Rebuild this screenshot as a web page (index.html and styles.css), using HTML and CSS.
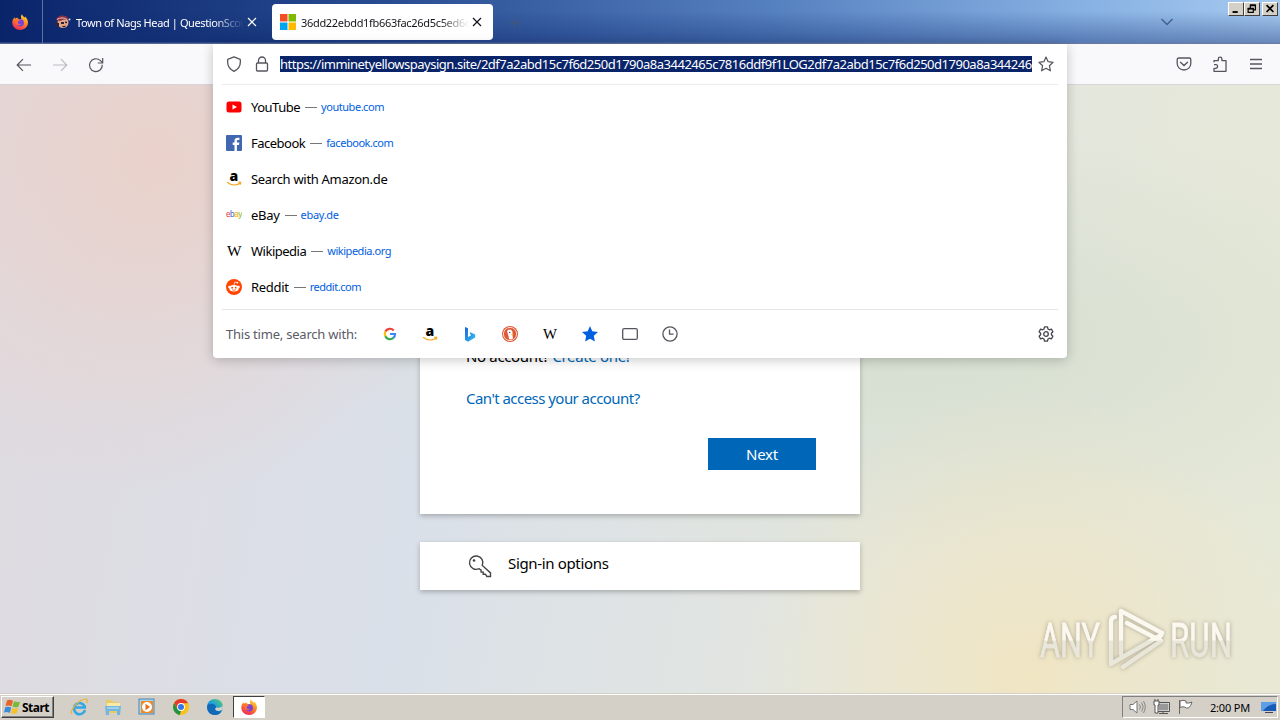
FILE: index.html
```html
<!DOCTYPE html>
<html lang="en">
<head>
    <meta charset="UTF-8">
    <meta name="viewport" content="width=device-width, initial-scale=1.0">
    <title>Desktop</title>
    <link rel="stylesheet" href="styles.css">
</head>
<body>
    <!-- shared icons -->
    <svg class="defs" width="0" height="0">
        <defs>
            <linearGradient id="fire" x1="0.8" y1="0" x2="0.3" y2="1">
                <stop offset="0" stop-color="#ffde3a"/>
                <stop offset="0.45" stop-color="#ff8a1f"/>
                <stop offset="1" stop-color="#f0245b"/>
            </linearGradient>
            <linearGradient id="edge" x1="0" y1="1" x2="1" y2="0">
                <stop offset="0" stop-color="#0c59a4"/>
                <stop offset="0.5" stop-color="#1b9de2"/>
                <stop offset="1" stop-color="#5fd45c"/>
            </linearGradient>
            <linearGradient id="bing" x1="0" y1="0" x2="1" y2="1">
                <stop offset="0" stop-color="#1b62d8"/>
                <stop offset="1" stop-color="#35c5f0"/>
            </linearGradient>
        </defs>
        <symbol id="firefox" viewBox="0 0 16 16">
            <path fill="url(#fire)" d="M10 .2c.4 1.500 1.500 2.200 2.500 3.300.5-.1.700-.6.700-.9C15 4.400 16 6.500 16 8.600 16 12.800 12.500 16 8.200 16 3.700 16 .3 12.700.3 8.500c0-2 .8-3.900 2.100-5.300L3 4.700C3.900 3.900 4.700 3.700 5.500 3.900L7 5.300 9.400 5C8.700 3.300 8.900 1.500 10 .2z"/>
            <circle cx="8.400" cy="8.800" r="3.600" fill="#7a42d6"/>
            <path fill="#ff7139" d="M3.500 5.500c1.500-.6 2.500.4 4.300.5 0 .9-1.900 1.100-2.200 2.200 0 1.500 1.700 2.200 3.300 1.600-.8 1.500-3.700 1.800-4.700-.2-.6-1.200-1-2.800-.7-4.100z"/>
        </symbol>
        <symbol id="close" viewBox="0 0 10 10">
            <path d="M1 1l8 8M9 1L1 9" fill="none" stroke="currentColor" stroke-width="1.200"/>
        </symbol>
    </svg>

    <div class="tabbar">
        <div class="fx-view"><svg width="16" height="16"><use href="#firefox"/></svg></div>
        <div class="tab">
            <svg width="16" height="16" viewBox="0 0 16 16">
                <circle cx="8" cy="8.500" r="5.500" fill="#e3a58a"/>
                <path d="M1 6c1-5 9-6 12-2l1 2-5-.4L5 7z" fill="#8c3145"/>
                <path d="M2 5.500c3-2 7-2 10 0" stroke="#f0cdbf" fill="none"/>
                <path d="M0 8l4 1v4l-3-2zM6 8h3v2H6zM10 7.500l2 .3v1.500l-2-.3zM7 12l4-.3-1 1.500H8z" fill="#35242f"/>
                <circle cx="14.500" cy="5.500" r="1" fill="#ddd"/>
            </svg>
            <span class="tab-title">Town of Nags Head | QuestionScou</span>
            <svg class="tab-close" width="10" height="10"><use href="#close"/></svg>
        </div>
        <div class="tab active">
            <svg width="16" height="16" viewBox="0 0 16 16">
                <path fill="#f25022" d="M0 0h7.500v7.500H0z"/><path fill="#7fba00" d="M8.500 0H16v7.500H8.500z"/>
                <path fill="#00a4ef" d="M0 8.500h7.500V16H0z"/><path fill="#ffb900" d="M8.500 8.500H16V16H8.500z"/>
            </svg>
            <span class="tab-title">36dd22ebdd1fb663fac26d5c5ed6d</span>
            <svg class="tab-close" width="10" height="10"><use href="#close"/></svg>
        </div>
        <svg class="new-tab" width="12" height="12" viewBox="0 0 12 12"><path d="M6 1v10M1 6h10" stroke="#4a5475"/></svg>
        <svg class="tab-list" width="14" height="8" viewBox="0 0 14 8"><path d="M1.500 1l5.500 5.500L12.500 1" fill="none" stroke="#435f90" stroke-width="1.400"/></svg>
        <div class="win-buttons">
            <svg class="win-btn" width="16" height="14" viewBox="0 0 16 14"><path d="M4 10.500h6" stroke="#000" stroke-width="2.200"/></svg>
            <svg class="win-btn" width="16" height="14" viewBox="0 0 16 14"><path d="M6 3h6v5h-2M6 3v3M3.500 6.500h6v4.500h-6z" fill="none" stroke="#000" stroke-width="1.400"/><path d="M5.500 2.500h7M3 6.500h7" stroke="#000" stroke-width="2"/></svg>
            <svg class="win-btn win-close" width="16" height="14" viewBox="0 0 16 14"><path d="M4 2.500l8 8M12 2.500l-8 8" stroke="#000" stroke-width="2"/></svg>
        </div>
    </div>

    <div class="toolbar">
        <svg width="16" height="16" viewBox="0 0 16 16"><path d="M15 8H1.500M7 2.200L1.200 8 7 13.800" fill="none" stroke="#55555f" stroke-width="1.200"/></svg>
        <svg width="16" height="16" viewBox="0 0 16 16"><path d="M1 8h13.500M9 2.200L14.800 8 9 13.800" fill="none" stroke="#bbbbc3" stroke-width="1.200"/></svg>
        <svg width="16" height="16" viewBox="0 0 16 16"><path d="M14.300 7.800A6.400 6.400 0 1 1 12.200 3.400L14.500 5.600M14.700 1v5H9.800" fill="none" stroke="#55555f" stroke-width="1.200"/></svg>
        <div class="toolbar-right">
            <svg width="16" height="16" viewBox="0 0 16 16"><path d="M2.800 2h10.400q1.600 0 1.600 1.600V7.500a6.800 6.500 0 0 1-13.600 0V3.600Q1.200 2 2.800 2zM4.500 6.200L8 9.500l3.500-3.300" fill="none" stroke="#55555f" stroke-width="1.300" stroke-linecap="round"/></svg>
            <svg width="16" height="16" viewBox="0 0 16 16"><path d="M2 6.300V4.600h4.300V3a1.800 1.800 0 0 1 3.600 0v1.600H14v10.700H2v-3h1.800a1.800 1.800 0 0 0 0-3.600H2" fill="none" stroke="#55555f" stroke-width="1.300" stroke-linejoin="round"/></svg>
            <svg width="16" height="16" viewBox="0 0 16 16"><path d="M2 3.500h12M2 8h12M2 12.500h12" stroke="#55555f" stroke-width="1.300"/></svg>
        </div>
    </div>

    <main class="page">
        <div class="card signin">
            <p class="no-account">No account? <a>Create one!</a></p>
            <p class="cant-access"><a>Can't access your account?</a></p>
            <button class="next">Next</button>
        </div>
        <div class="card options">
            <svg width="24" height="24" viewBox="0 0 24 24"><path d="M14.300 11.400a6.700 6.700 0 1 0-3.200 3.300l2 1.500v1.900h2.100v2.100h2.200l1.500 2.300h3.600v-3.600z" fill="none" stroke="#444" stroke-width="1.400"/><circle cx="6" cy="6.500" r="1.300" fill="#444"/></svg>
            <span>Sign-in options</span>
        </div>
        <svg class="watermark" width="204" height="72" viewBox="0 0 204 72">
            <defs>
                <linearGradient id="wm" gradientUnits="userSpaceOnUse" x1="0" y1="0" x2="0" y2="72">
                    <stop offset="0.470" stop-color="#fbf8f0"/>
                    <stop offset="0.490" stop-color="#e9e6da"/>
                </linearGradient>
            </defs>
            <g fill="none" stroke="url(#wm)" stroke-width="4.400" stroke-linecap="round" stroke-linejoin="round">
                <path d="M80 11q-4 0-4 5v42l10-6 40-23"/>
                <path d="M124 32l3-5L86 5v43M92 17l34 18-38 26"/>
            </g>
            <text class="wm-text" x="5" y="51" textLength="60" lengthAdjust="spacingAndGlyphs">ANY</text>
            <text class="wm-text" x="135" y="51" textLength="62" lengthAdjust="spacingAndGlyphs">RUN</text>
        </svg>
    </main>

    <div class="urlbar">
        <div class="url-input">
            <svg width="16" height="16" viewBox="0 0 16 16"><path d="M8 .8l6.200 2.500c.8 5-1.200 9.500-6.200 12C3 12.800 1 8.300 1.800 3.300z" fill="none" stroke="#55555f" stroke-width="1.300" stroke-linejoin="round"/></svg>
            <svg width="14" height="16" viewBox="0 0 14 16"><path d="M2.500 7h9q1 0 1 1v6q0 1-1 1h-9q-1 0-1-1V8q0-1 1-1zM3.500 7V4.500a3.500 3.500 0 0 1 7 0V7" fill="none" stroke="#55555f" stroke-width="1.300"/></svg>
            <span class="url">https://imminetyellowspaysign.site/2df7a2abd15c7f6d250d1790a8a3442465c7816ddf9f1LOG2df7a2abd15c7f6d250d1790a8a3442465</span>
            <svg width="16" height="16" viewBox="0 0 16 16"><path d="M8 1l2.100 4.700 5 .6-3.700 3.400 1 5.100L8 12.300l-4.400 2.500 1-5.100L.9 6.300l5-.6z" fill="none" stroke="#55555f" stroke-width="1.200" stroke-linejoin="round"/></svg>
        </div>
        <ul class="results">
            <li>
                <svg width="16" height="16" viewBox="0 0 16 16"><rect x=".5" y="2.500" width="15" height="11" rx="2.500" fill="#f00"/><path d="M6.500 5.500v5L11 8z" fill="#fff"/></svg>
                <span>YouTube</span><i></i><a>youtube.com</a>
            </li>
            <li>
                <svg width="16" height="16" viewBox="0 0 16 16"><rect width="16" height="16" rx="1" fill="#4267b2"/><path d="M8.500 16V10H6.700V7.600h1.800V6c0-2 1.200-3.200 3.200-3.200h1.700V5H12c-.9 0-1.100.5-1.100 1.200v1.400h2.400L13 10h-2.100v6z" fill="#fff"/></svg>
                <span>Facebook</span><i></i><a>facebook.com</a>
            </li>
            <li>
                <svg width="16" height="16" viewBox="0 0 16 16"><text class="amazon-a" x="3.500" y="10">a</text><path class="amazon-smile" d="M1 11.300c4.300 3.200 9.500 3.100 13 .9M12.300 11.200l2.400.1-.5 2.300"/></svg>
                <span class="loose">Search with Amazon.de</span>
            </li>
            <li>
                <svg width="16" height="16" viewBox="0 0 16 16"><text x="0" y="10" font-family="Liberation Sans, sans-serif" font-size="8.500" textLength="16" lengthAdjust="spacingAndGlyphs"><tspan fill="#e53238">e</tspan><tspan fill="#3a64d2">b</tspan><tspan fill="#f5af02">a</tspan><tspan fill="#86b817">y</tspan></text></svg>
                <span class="loose">eBay</span><i></i><a class="loose">ebay.de</a>
            </li>
            <li>
                <svg width="16" height="16" viewBox="0 0 16 16"><text class="wiki" x="1" y="13" textLength="14" lengthAdjust="spacingAndGlyphs">W</text></svg>
                <span>Wikipedia</span><i></i><a>wikipedia.org</a>
            </li>
            <li>
                <svg width="16" height="16" viewBox="0 0 16 16"><circle cx="8" cy="8" r="8" fill="#ff4500"/><ellipse cx="8" cy="9.300" rx="4.700" ry="3.300" fill="#fff"/><circle cx="3.400" cy="8" r="1.200" fill="#fff"/><circle cx="12.600" cy="8" r="1.200" fill="#fff"/><path d="M8 6l.8-3 2.300.5" stroke="#fff" stroke-width=".7" fill="none"/><circle cx="11.400" cy="3.600" r=".9" fill="#fff"/><circle cx="6.200" cy="8.700" r=".9" fill="#ff4500"/><circle cx="9.800" cy="8.700" r=".9" fill="#ff4500"/><path d="M6 10.700q2 1.300 4 0" stroke="#ff4500" stroke-width=".7" fill="none"/></svg>
                <span class="loose">Reddit</span><i></i><a>reddit.com</a>
            </li>
        </ul>
        <div class="engines">
            <span>This time, search with:</span>
            <svg width="16" height="16" viewBox="0 0 16 16" fill="none" stroke-width="2.200">
                <path stroke="#ea4335" d="M3.300 5.600A5.100 5.100 0 0 1 11.700 4.500"/>
                <path stroke="#fbbc05" d="M3.400 10.300a5.100 5.100 0 0 1 0-4.800"/>
                <path stroke="#34a853" d="M11.500 11.800A5.100 5.100 0 0 1 3.300 10.200"/>
                <path stroke="#4285f4" d="M8 8h5.100a5.100 5.100 0 0 1-1.800 3.900"/>
            </svg>
            <svg width="16" height="16" viewBox="0 0 16 16"><text class="amazon-a" x="3.500" y="10">a</text><path class="amazon-smile" d="M1 11.300c4.300 3.200 9.500 3.100 13 .9M12.300 11.200l2.400.1-.5 2.300"/></svg>
            <svg width="16" height="16" viewBox="0 0 16 16"><path d="M3 1l3 1.200v8.900l2.900-1.700L7.600 6l5.600 2.500v3L6 15.700l-3-1.800z" fill="url(#bing)"/></svg>
            <svg width="16" height="16" viewBox="0 0 16 16"><circle cx="8" cy="8" r="8" fill="#de5833"/><circle cx="8" cy="8" r="6.600" fill="none" stroke="#fff" stroke-width=".8"/><path d="M5 5q3.500-3 5.500.5v4l.5 3q-2 1.300-3.800.8L6.200 9z" fill="#fff"/><path d="M8.300 8.200l3.200-.5-.4 1.500z" fill="#fdbb2d"/><circle cx="7.700" cy="6.500" r=".7" fill="#345"/></svg>
            <svg width="16" height="16" viewBox="0 0 16 16"><text class="wiki" x="1" y="13" textLength="14" lengthAdjust="spacingAndGlyphs">W</text></svg>
            <svg width="16" height="16" viewBox="0 0 16 16"><path d="M8 0l2.300 5.200 5.700.7-4.200 3.900 1.100 5.800L8 12.800l-4.900 2.800 1.100-5.800L0 5.900l5.700-.7z" fill="#0060df"/></svg>
            <svg width="16" height="16" viewBox="0 0 16 16"><rect x=".7" y="2.600" width="14.600" height="10.800" rx="1.500" fill="none" stroke="#55555f" stroke-width="1.300"/></svg>
            <svg width="16" height="16" viewBox="0 0 16 16"><circle cx="8" cy="8" r="7.100" fill="none" stroke="#55555f" stroke-width="1.300"/><path d="M7.500 3.500v4.700h4" fill="none" stroke="#55555f" stroke-width="1.300"/></svg>
            <svg class="gear" width="16" height="16" viewBox="0 0 16 16" fill="none" stroke="#45454f" stroke-width="1.300" stroke-linejoin="round"><path d="M6.500.9h3l.5 2.100 1.400.8 2-.7 1.500 2.600-1.500 1.500v1.600l1.500 1.500-1.500 2.600-2-.7-1.400.8-.5 2.100h-3L6 13l-1.400-.8-2 .7-1.500-2.600 1.500-1.500V7.200L1.100 5.700l1.500-2.600 2 .7L6 3z"/><circle cx="8" cy="8" r="2.300"/></svg>
        </div>
    </div>

    <footer class="taskbar">
        <div class="start">
            <svg width="17" height="16" viewBox="0 0 17 16"><path d="M3 1.500q3-1.500 6 .3L7.500 7.300q-3-1.400-6-.2z" fill="#e8622c"/><path d="M10 2.300q3 1.500 6 .2l-1.500 5.300q-3 1.300-6-.2z" fill="#7cb83a"/><path d="M1.200 8.300q3-1.300 6 .2L5.800 14q-3-1.700-5.800-.4z" fill="#3a8bd8"/><path d="M8.200 8.900q3 1.400 6 .2l-1.500 5.200q-3 1.200-6-.3z" fill="#f4c22c"/></svg>
            <b>Start</b>
        </div>
        <svg class="app" width="18" height="18" viewBox="0 0 18 18"><path d="M15 12.200A5.600 5.600 0 1 1 14.800 8.500v1H5" fill="none" stroke="#35a7e5" stroke-width="2.600"/><path d="M2 16C-1 13 9 1 16 1.200c2 .2 1.300 2.500.4 4" fill="none" stroke="#e8b63a" stroke-width="1.300"/></svg>
        <svg class="app" width="18" height="18" viewBox="0 0 18 18"><path d="M2 2h6l1 2h6v11H2z" fill="#e9ca6a"/><path d="M3 5h13v8H3z" fill="#f8e9a9"/><path d="M1 8h16l-1 9h-3v-4H5v4H2z" fill="#73b7df"/><path d="M3 10h12" stroke="#c8e9fa"/></svg>
        <svg class="app" width="18" height="18" viewBox="0 0 18 18"><rect x="1" y="1" width="15" height="15" fill="#a9d4f2" stroke="#4985b8"/><rect x="3" y="3" width="12" height="12" fill="#f28a20"/><circle cx="9" cy="9" r="5" fill="#fff"/><path d="M7.500 5.800v6.400L12 9z" fill="#e9701b"/></svg>
        <svg class="app" width="18" height="16" viewBox="-1 0 18 16"><circle cx="8" cy="8" r="8" fill="#fbc116"/><path d="M1.100 4A8 8 0 0 1 15 4.200H8L4.700 10z" fill="#e33b2e"/><path d="M1.100 4l3.600 6.200L8 12 6.800 15.900A8 8 0 0 1 1.100 4z" fill="#229342"/><circle cx="8" cy="8" r="3.900" fill="#fff"/><circle cx="8" cy="8" r="3" fill="#3476e5"/></svg>
        <svg class="app" width="18" height="16" viewBox="-1 0 18 16"><circle cx="8" cy="8" r="8" fill="url(#edge)"/><path d="M.2 7Q2 4 6 5q3 .8 3.200 3.500-1.700 1.200-.4 2.700 2.500 2 6 .2Q12.500 16 8 16-.3 15.500.2 7z" fill="#1269b7"/><path d="M9.200 8.500q-2 1.800 0 3 3 1.200 6.400-1 .7-2.500-.2-4-1 3-6.200 2z" fill="#d4d0c8"/></svg>
        <div class="running"><svg width="16" height="16"><use href="#firefox"/></svg></div>
        <div class="tray">
            <svg width="17" height="16" viewBox="0 0 17 16"><path d="M1 5.500h3L8 2v12l-4-3.500H1z" fill="#fff" stroke="#777"/><path d="M10.500 5.500q2 2.500 0 5M12.700 3.500q3 4.500 0 9M14.500 2q3.500 6 0 12" fill="none" stroke="#888"/></svg>
            <svg width="17" height="16" viewBox="0 0 17 16"><rect x="5" y="4" width="11" height="8" fill="#999" stroke="#fff"/><path d="M4.500 3.500h12v9h-12zM6 14.500h9M10 12v2" fill="none" stroke="#555"/><path d="M1 2h5v4H5v8H2V6H1zM2 0v2M5 0v2" fill="#fff" stroke="#555"/></svg>
            <svg width="17" height="16" viewBox="0 0 17 16"><path d="M2.500 1v14M3 2q3-1.500 6 0v2q3 .5 6-1-1 4-3.500 6-2 .5-4-1-2.500-.7-4.500.5z" fill="#fff" stroke="#666"/></svg>
            <span class="clock">2:00 PM</span>
            <svg width="15" height="16" viewBox="0 0 15 16"><path d="M0 3h15v9H0z" fill="#1759b5"/><path d="M0 3h15v2Q7 5 2 12H0z" fill="#5e9ee6"/><path d="M4 13.500h8" stroke="#445"/></svg>
        </div>
    </footer>
</body>
</html>
```
FILE: styles.css
```css
:root {
    --ui-font: "Noto Sans", "Open Sans", sans-serif;
    --link: #0067b8;
    --chrome: #f9f9fb;
    --classic: #d4d0c8;
}

* {
    margin: 0;
    padding: 0;
    box-sizing: border-box;
}

body {
    width: 1280px;
    height: 720px;
    overflow: hidden;
    position: relative;
    display: flex;
    flex-direction: column;
    font-family: var(--ui-font);
    color: #000;
}

svg {
    flex: none;
    display: block;
}

.defs {
    position: absolute;
}

.amazon-a {
    font: 800 14px "Open Sans", sans-serif;
}

.amazon-smile {
    fill: none;
    stroke: #f5a623;
    stroke-width: 1.2;
}

.wiki {
    font: 14px "Liberation Serif", serif;
}

/* tab strip */
.tabbar {
    height: 44px;
    flex: none;
    display: flex;
    background: linear-gradient(to bottom, transparent 25%, rgba(10, 36, 106, 0.38) 95%, #68799f), linear-gradient(to right, #0a246a 0%, #284c92 30%, #5580bf 60%, #86b0e2 84%, #a6caf0 100%);
}

.fx-view {
    width: 43px;
    padding: 14px 0 0 12px;
    border-right: 1px solid #5c719f;
}

.tab {
    height: 36px;
    margin: 4px 0 0 4px;
    width: 221px;
    padding: 0 11px 0 8px;
    display: flex;
    align-items: center;
    font-size: 11px;
    letter-spacing: -0.4px;
    color: #fff;
    border-radius: 4px;
}

.tab.active {
    background: #fff;
    color: #15141a;
    letter-spacing: -0.31px;
}

.tab-title {
    width: 169px;
    margin-left: 5px;
    margin-right: 3px;
    white-space: nowrap;
    overflow: hidden;
    mask-image: linear-gradient(to right, #000 82%, transparent);
}

.new-tab {
    margin: 17px 0 0 16px;
}

.tab-list {
    margin: 18px 0 0 auto;
}

.win-buttons {
    display: flex;
    margin: 2px 2px 0 54px;
}

.win-btn {
    background: var(--classic);
    border: 1px solid;
    border-color: #fff #404040 #404040 #fff;
}

.win-close {
    margin-left: 2px;
}

/* navigation */
.toolbar {
    height: 41px;
    flex: none;
    display: flex;
    gap: 20px;
    padding: 13px 16px 0;
    background: var(--chrome);
    border-bottom: 1px solid #d7d5da;
}

.toolbar-right {
    display: flex;
    gap: 20px;
    margin: -1px 0 0 auto;
}

.urlbar {
    position: absolute;
    left: 213px;
    top: 44px;
    width: 854px;
    height: 314px;
    padding: 0 9px;
    background: #fff;
    border-radius: 0 0 4px 4px;
    box-shadow: 0 2px 12px rgba(0, 0, 0, 0.22);
}

.url-input {
    height: 41px;
    display: flex;
    align-items: center;
    padding: 0 4px;
    border-bottom: 1px solid #ececef;
}

.url-input svg:nth-child(2) {
    margin: 0 11px 0 13px;
}

.url {
    width: 752px;
    height: 16px;
    margin-right: 6px;
    overflow: hidden;
    white-space: nowrap;
    font-size: 13px;
    line-height: 16px;
    letter-spacing: -0.49px;
    color: #fff;
    background: #0a246a;
}

.results {
    list-style: none;
    padding-top: 4px;
}

.results li {
    height: 36px;
    display: flex;
    align-items: center;
    padding-left: 4px;
    font-size: 13px;
    letter-spacing: -0.5px;
}

.results span {
    margin-left: 9px;
    white-space: nowrap;
}

.results .loose {
    letter-spacing: -0.3px;
}

.results i {
    width: 12px;
    height: 1px;
    margin: 0 4px 0 5px;
    background: #777;
}

.results a {
    margin-top: -2px;
    font-size: 11px;
    letter-spacing: -0.46px;
    color: #0060df;
}

.engines {
    display: flex;
    align-items: center;
    gap: 24px;
    height: 49px;
    margin-top: 4px;
    padding: 0 4px;
    border-top: 1px solid #e6e6e9;
}

.engines span {
    width: 132px;
    white-space: nowrap;
    font-size: 13px;
    letter-spacing: -0.22px;
    color: #5b5b66;
}

.gear {
    margin-left: auto;
}

/* sign-in page */
.page {
    position: relative;
    height: 608px;
    flex: none;
    display: flex;
    flex-direction: column;
    align-items: center;
    background:
        radial-gradient(circle at 80% 97%, #f0e5c3 0, rgba(240, 229, 195, 0) 24%),
        radial-gradient(circle at 12% 12%, #ead1ca 0, rgba(234, 209, 202, 0) 27%),
        radial-gradient(ellipse at 70% 42%, #d5dfd0 0, rgba(213, 223, 208, 0) 45%),
        linear-gradient(100deg, #dfdae0 0%, #dae0e9 35%, #e3e6df 68%, #e7e9d7 100%);
}

.card {
    width: 440px;
    background: #fff;
    box-shadow: 0 2px 5px rgba(0, 0, 0, 0.25);
}

.signin {
    height: 429px;
    padding: 261px 44px 44px 46px;
    display: flex;
    flex-direction: column;
    font-size: 15px;
    line-height: 20px;
}

.card a {
    color: var(--link);
}

.no-account {
    letter-spacing: -0.35px;
}

.cant-access {
    margin-top: 22px;
    letter-spacing: -0.54px;
}

.next {
    align-self: flex-end;
    width: 108px;
    height: 32px;
    margin-top: 30px;
    border: 0;
    background: #0067b8;
    color: #fff;
    font: 15px var(--ui-font);
    letter-spacing: -0.2px;
}

.options {
    height: 48px;
    margin-top: 28px;
    padding-left: 48px;
    display: flex;
    align-items: center;
    gap: 16px;
    font-size: 15px;
    letter-spacing: -0.34px;
}

.options span {
    margin-top: -6px;
}

.watermark {
    position: absolute;
    left: 1035px;
    top: 521px;
    filter: drop-shadow(0 0 2px rgba(110, 100, 85, 0.5));
}

.wm-text {
    font-family: Roboto, sans-serif;
    font-size: 49px;
    fill: url(#wm);
    stroke: url(#wm);
    stroke-width: 0.8;
}

/* taskbar */
.taskbar {
    height: 27px;
    display: flex;
    align-items: center;
    padding: 1px 2px 0 1px;
    background: var(--classic);
    box-shadow: inset 0 1px #d4d0c8, inset 0 2px #fff;
    font-size: 11px;
}

.start {
    width: 53px;
    height: 22px;
    display: flex;
    align-items: center;
    gap: 1px;
    padding-left: 2px;
    border: 1px solid;
    border-color: #fff #404040 #404040 #fff;
    box-shadow: inset -1px -1px #808080;
    margin-right: 16px;
}

.start b {
    font-size: 12px;
    letter-spacing: -0.5px;
}

.app {
    margin-right: 16px;
}

.running {
    width: 32px;
    height: 22px;
    padding: 2px 7px;
    background: #fff;
    border: 1px solid;
    border-color: #404040 #fff #fff #404040;
    margin-left: -7px;
}

.tray {
    width: 156px;
    height: 22px;
    margin-left: auto;
    padding: 0 1px 0 6px;
    display: flex;
    align-items: center;
    gap: 7px;
    border: 1px solid;
    border-color: #808080 #fff #fff #808080;
}

.clock {
    width: 41px;
    margin: 0 4px 0 9px;
    white-space: nowrap;
    letter-spacing: -0.2px;
}
```
